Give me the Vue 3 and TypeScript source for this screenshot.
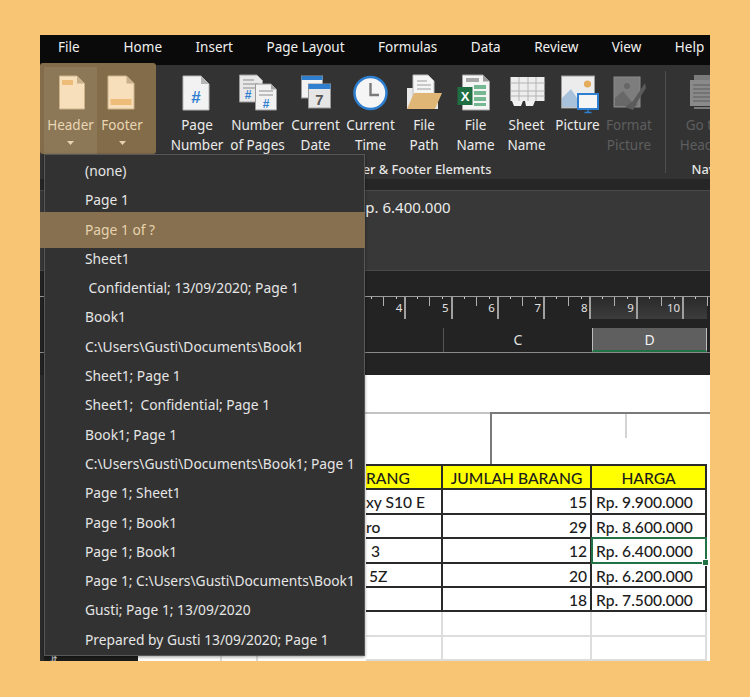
<script setup lang="ts">
// Excel "Header" dropdown over the Header & Footer Tools ribbon
interface RibbonButton {
  id: string
  lines: string[]
  width: number
  disabled?: boolean
}

const tabs = ['File', 'Home', 'Insert', 'Page Layout', 'Formulas', 'Data', 'Review', 'View', 'Help']

const hfButtons: RibbonButton[] = [
  { id: 'header', lines: ['Header'], width: 57 },
  { id: 'footer', lines: ['Footer'], width: 50 },
]

const elementButtons: RibbonButton[] = [
  { id: 'pagenum', lines: ['Page', 'Number'], width: 60 },
  { id: 'pages', lines: ['Number', 'of Pages'], width: 61 },
  { id: 'date', lines: ['Current', 'Date'], width: 55 },
  { id: 'time', lines: ['Current', 'Time'], width: 55 },
  { id: 'path', lines: ['File', 'Path'], width: 52 },
  { id: 'file', lines: ['File', 'Name'], width: 51 },
  { id: 'sheet', lines: ['Sheet', 'Name'], width: 51 },
  { id: 'picture', lines: ['Picture'], width: 51 },
  { id: 'format', lines: ['Format', 'Picture'], width: 52, disabled: true },
]

const menuItems = [
  '(none)',
  'Page 1',
  'Page 1 of ?',
  'Sheet1',
  ' Confidential; 13/09/2020; Page 1',
  'Book1',
  'C:\\Users\\Gusti\\Documents\\Book1',
  'Sheet1; Page 1',
  'Sheet1;  Confidential; Page 1',
  'Book1; Page 1',
  'C:\\Users\\Gusti\\Documents\\Book1; Page 1',
  'Page 1; Sheet1',
  'Page 1; Book1',
  'Page 1; Book1',
  'Page 1; C:\\Users\\Gusti\\Documents\\Book1',
  'Gusti; Page 1; 13/09/2020',
  'Prepared by Gusti 13/09/2020; Page 1',
]
const activeItem = 2

const rulerMarks = [4, 5, 6, 7, 8, 9, 10]

// The first column is mostly covered by the menu, pad is where its text shows
const rows = [
  { name: 'xy S10 E', pad: 0, qty: 15, price: 'Rp. 9.900.000' },
  { name: 'ro', pad: 0, qty: 29, price: 'Rp. 8.600.000' },
  { name: '3', pad: 5, qty: 12, price: 'Rp. 6.400.000', selected: true },
  { name: '5Z', pad: 3, qty: 20, price: 'Rp. 6.200.000' },
  { name: '', pad: 0, qty: 18, price: 'Rp. 7.500.000' },
]
</script>

<template>
  <div class="page">
    <div class="frame">
      <nav class="tabs">
        <span v-for="tab in tabs" :key="tab" class="tab">{{ tab }}</span>
      </nav>

      <section class="ribbon">
        <div class="hf-group">
          <div
            v-for="btn in hfButtons"
            :key="btn.id"
            :class="['rb-btn', 'hf-btn', btn.id]"
            :style="{ width: btn.width + 'px' }"
          >
            <svg class="rb-icon" width="44" height="40" viewBox="0 0 44 40">
              <path
                v-if="btn.id === 'header'"
                d="M10.5 2H28L35.5 9.500V35H10.500Z"
                fill="#f6dfba"
                stroke="#cdb48c"
              />
              <path v-if="btn.id === 'header'" d="M28 2V9.500H35.500Z" fill="#c9b08a" />
              <rect v-if="btn.id === 'header'" x="13" y="6" width="11" height="5" fill="#ecbc78" />
              <path
                v-if="btn.id === 'footer'"
                d="M8 2H26.500L34 9.500V35H8Z"
                fill="#f6dfba"
                stroke="#cdb48c"
              />
              <path v-if="btn.id === 'footer'" d="M26.500 2V9.500H34Z" fill="#c9b08a" />
              <rect v-if="btn.id === 'footer'" x="10.500" y="25" width="21" height="6" fill="#ecbc78" />
            </svg>
            <span class="rb-label">{{ btn.lines[0] }}</span>
            <svg class="caret" width="7" height="4" viewBox="0 0 7 4">
              <path d="M0 0H7L3.500 4Z" fill="#e6d3ae" />
            </svg>
          </div>
        </div>

        <div class="rb-group elements">
          <div class="rb-buttons">
            <div
              v-for="btn in elementButtons"
              :key="btn.id"
              :class="['rb-btn', { disabled: btn.disabled }]"
              :style="{ width: btn.width + 'px' }"
            >
              <svg class="rb-icon" width="44" height="40" viewBox="0 0 44 40">
                <template v-if="btn.id === 'pagenum'">
                  <path d="M8 2H26L34 10V36H8Z" fill="#f2f2f2" stroke="#b5b5b5" />
                  <path d="M26 2V10H34Z" fill="#b5b5b5" />
                  <text x="21" y="29" class="hash" font-size="17">#</text>
                </template>
                <template v-else-if="btn.id === 'pages'">
                  <path d="M3.500 1H21L26.500 6.500V28H3.500Z" fill="#e8e8e8" stroke="#9a9a9a" />
                  <path d="M7 6H18M7 10H22M7 14H22" stroke="#8c8c8c" />
                  <text x="12" y="25" class="hash" font-size="12">#</text>
                  <path d="M19.500 10H35L40.500 15.500V36H19.500Z" fill="#f2f2f2" stroke="#9a9a9a" />
                  <path d="M35 10V15.500H40.500Z" fill="#a8a8a8" />
                  <path d="M23 17H37M23 21H37" stroke="#8c8c8c" />
                  <text x="30" y="34" class="hash" font-size="12">#</text>
                </template>
                <template v-else-if="btn.id === 'date'">
                  <rect x="7.500" y="2" width="21" height="22" fill="#f2f2f2" stroke="#9a9a9a" />
                  <rect x="7.500" y="2" width="21" height="4" fill="#2f7fd1" />
                  <rect x="14.500" y="10" width="22" height="24" fill="#e6e6e6" stroke="#9a9a9a" />
                  <rect x="14.500" y="10" width="22" height="5" fill="#2f7fd1" />
                  <text x="25.500" y="31" class="date-num" font-size="15">7</text>
                </template>
                <template v-else-if="btn.id === 'time'">
                  <circle cx="21.500" cy="19" r="16" fill="#f5f5f5" stroke="#2f7fd1" stroke-width="2.500" />
                  <path d="M21.500 9V21H30" fill="none" stroke="#7a7a7a" stroke-width="2.400" />
                </template>
                <template v-else-if="btn.id === 'path'">
                  <path d="M5 35V14H11V22H36V35Z" fill="#e9e9e9" />
                  <path d="M11 1H26L32 7V26H11Z" fill="#f5f5f5" stroke="#bdbdbd" />
                  <path d="M15 7H25M15 11H29M15 15H29" stroke="#9c9c9c" />
                  <path d="M5 35L12 19H40L33 35Z" fill="#e0b676" />
                </template>
                <template v-else-if="btn.id === 'file'">
                  <path d="M8.500 1H29L35.500 7.500V36H8.500Z" fill="#f5f5f5" stroke="#a0a0a0" />
                  <path d="M29 1V7.500H35.500Z" fill="#9a9a9a" />
                  <path d="M12 4H25V8H12Z" fill="#a8a8a8" />
                  <path d="M20 11H32V15H20ZM20 17H32V21H20ZM20 23H32V27H20ZM20 29H32V32H20Z" fill="#75b892" />
                  <rect x="3.500" y="13" width="15" height="18" fill="#1f6f43" />
                  <text x="11" y="27" class="xl" font-size="13">X</text>
                </template>
                <template v-else-if="btn.id === 'sheet'">
                  <rect x="5.500" y="3" width="34" height="24" fill="#ededed" />
                  <path d="M5.500 9H39.500M5.500 17H39.500M5.500 22H39.500M14 3V27M23 3V27M31 3V27" stroke="#b4b4b4" />
                  <path d="M7 27H18L16 32H9ZM20 27H30L28 32H21Z" fill="#f2f2f2" />
                </template>
                <template v-else-if="btn.id === 'picture'">
                  <rect x="5.500" y="2" width="33" height="32" fill="#ececec" stroke="#9c9c9c" />
                  <circle cx="31.500" cy="10" r="3.600" fill="#e3ad5c" />
                  <path d="M6 33V24L15 15L27 33Z" fill="#a9c2dc" />
                  <rect x="22" y="20" width="20" height="15" fill="#f5f5f5" stroke="#2f7fd1" stroke-width="2" />
                  <path d="M32 35V38M28.500 38.500H35.500" stroke="#2f7fd1" stroke-width="1.400" />
                </template>
                <template v-else-if="btn.id === 'format'">
                  <rect x="7" y="3" width="26" height="30" fill="#7d7d7d" stroke="#8c8c8c" />
                  <circle cx="20" cy="12" r="3" fill="#676767" />
                  <path d="M8 32V24L16 17L28 32Z" fill="#686868" />
                  <path d="M38 9L26 27L29 30L39 14Z" fill="#5b5b5b" />
                  <path d="M26 27L18 33L26 36L30 30Z" fill="#5b5b5b" />
                </template>
              </svg>
              <span v-for="line in btn.lines" :key="line" class="rb-label">{{ line }}</span>
            </div>
          </div>
          <div class="group-name">Header &amp; Footer Elements</div>
        </div>

        <div class="rb-divider"></div>

        <div class="rb-group nav-group">
          <div class="rb-buttons">
            <div class="rb-btn disabled nav-btn">
              <svg class="rb-icon" width="44" height="40" viewBox="0 0 44 40">
                <rect x="13" y="1" width="18" height="6" fill="#7b7b7b" />
                <rect x="9" y="6" width="26" height="26" fill="#8a8a8a" />
                <path d="M12 11H32M12 15H32M12 19H32M12 23H32M12 27H32" stroke="#5c5c5c" />
                <rect x="13" y="33" width="22" height="2" fill="#7b7b7b" />
              </svg>
              <span class="rb-label">Go to</span>
              <span class="rb-label">Header</span>
            </div>
          </div>
          <div class="group-name">Navigation</div>
        </div>
      </section>

      <div class="strip"></div>

      <div class="formula">Rp. 6.400.000</div>

      <div class="dark-band"></div>

      <div class="ruler">
        <div v-for="n in rulerMarks" :key="n" :class="['mark', { on: n > 8 }]">
          <span class="mark-num">{{ n }}</span>
        </div>
        <div class="mark on tail"></div>
      </div>

      <div class="col-heads">
        <div class="col-b"></div>
        <div class="col-c">C</div>
        <div class="col-d">D</div>
      </div>

      <div class="dark-band small"></div>

      <div class="sheet">
        <div class="sheet-top">
          <div class="blank-left"></div>
          <div class="blank-box"><i></i></div>
        </div>

        <div class="grid">
          <div class="cell head cell-b">RANG</div>
          <div class="cell head center">JUMLAH BARANG</div>
          <div class="cell head center">HARGA</div>
          <template v-for="row in rows" :key="row.price">
            <div class="cell cell-b"><span :style="{ paddingLeft: row.pad + 'px' }">{{ row.name }}</span></div>
            <div class="cell right">{{ row.qty }}</div>
            <div :class="['cell', 'price', { selected: row.selected }]">{{ row.price }}</div>
          </template>
        </div>

        <div class="empty-row"></div>
        <div class="empty-row"></div>

        <div class="status-corner"><span class="corner-tab">⇵</span></div>
      </div>

      <ul class="menu">
        <li v-for="(item, i) in menuItems" :key="i" :class="['menu-item', { active: i === activeItem }]">
          <span>{{ item }}</span>
        </li>
      </ul>
    </div>
  </div>
</template>

<style>
html,
body {
  margin: 0;
  background: #f8c575;
}
</style>

<style scoped>
.page {
  width: 750px;
  height: 697px;
  padding: 35px 40px 36px;
  box-sizing: border-box;
  background: #f8c575;
  font-family: 'Noto Sans', 'Open Sans', sans-serif;
}

.frame {
  position: relative;
  display: flex;
  flex-direction: column;
  width: 670px;
  height: 626px;
  overflow: hidden;
  background: #232323;
}

.tabs {
  display: flex;
  flex: none;
  box-sizing: border-box;
  gap: 33.5px;
  height: 30px;
  padding: 0 0 6px 18px;
  align-items: center;
  background: #0a0a0a;
  color: #f0f0f0;
  font-size: 13.5px;
  white-space: nowrap;
}

.tab:nth-child(2) {
  margin-left: 10.5px;
}

.ribbon {
  display: flex;
  flex: none;
  height: 114px;
  background: #333333;
}

.hf-group {
  display: flex;
  flex: none;
  width: 116px;
  height: 91px;
  margin-top: -2px;
  border-radius: 3px;
  background: #826c4a;
}

.rb-btn {
  display: flex;
  flex: none;
  flex-direction: column;
  align-items: center;
  padding-top: 9px;
  color: #ececec;
  font-size: 13.5px;
  line-height: 19.5px;
  white-space: nowrap;
}

.rb-btn.disabled {
  color: #5e5e5e;
}

.hf-btn {
  padding-top: 11px;
  color: #e9d6b2;
}

.hf-btn.header {
  background: #8c7757;
  margin: 4px 0 0 4px;
  width: 53px !important;
  padding-top: 7px;
}

.rb-icon {
  display: block;
  flex: none;
  margin-bottom: 2px;
}

.caret {
  display: block;
  margin-top: 5px;
}

.rb-group {
  display: flex;
  flex: none;
  flex-direction: column;
}

.rb-buttons {
  display: flex;
  height: 96px;
}

.elements {
  margin-left: 11px;
}

.group-name {
  color: #e6e6e6;
  font-size: 12.8px;
  font-weight: 500;
  line-height: 17px;
  text-align: center;
  white-space: nowrap;
}

.rb-divider {
  flex: none;
  width: 1px;
  height: 102px;
  margin: 6px 0 0 10px;
  background: #4f4f4f;
}

.nav-group {
  width: 104px;
  margin-left: 7px;
}

.nav-btn {
  width: 60px;
}

.hash {
  fill: #2f7fd1;
  font-family: 'Liberation Sans', sans-serif;
  font-weight: 700;
  text-anchor: middle;
}

.date-num {
  fill: #555555;
  font-family: 'Liberation Sans', sans-serif;
  font-weight: 700;
  text-anchor: middle;
}

.xl {
  fill: #ffffff;
  font-family: 'Liberation Sans', sans-serif;
  font-weight: 700;
  text-anchor: middle;
}

.strip {
  flex: none;
  height: 11px;
  background: #262626;
}

.formula {
  flex: none;
  box-sizing: border-box;
  height: 81px;
  padding: 6px 0 0 316px;
  border-top: 1px solid #4a4a4a;
  border-bottom: 1px solid #4a4a4a;
  background: #383838;
  color: #ececec;
  font-size: 15px;
  line-height: 20px;
}

.dark-band {
  flex: none;
  height: 25px;
  background: #232323;
}

.dark-band.small {
  height: 23px;
  border-top: 1px solid #8a8a8a;
  box-sizing: border-box;
}

.ruler {
  display: flex;
  flex: none;
  box-sizing: border-box;
  height: 32px;
  padding-left: 320px;
  border-top: 1px solid #9a9a9a;
  background: #232323;
}

.mark {
  position: relative;
  flex: none;
  box-sizing: border-box;
  width: 46.3px;
  height: 22px;
  border-right: 2px solid #a0a0a0;
  color: #e0e0e0;
  font-size: 11.5px;
  text-align: right;
}

.mark::before {
  content: '';
  position: absolute;
  top: 0;
  left: 23px;
  width: 1px;
  height: 9px;
  background: #b0b0b0;
}

.mark::after {
  content: '';
  position: absolute;
  top: 0;
  left: 11px;
  width: 24px;
  height: 2px;
  border-right: 1px solid #c8c8c8;
  border-left: 1px solid #c8c8c8;
}

.mark.on {
  background: linear-gradient(#2a2a2a, #3c3c3c);
}

.mark.tail {
  width: 23px;
  border-right: 0;
}

.mark-num {
  padding-right: 2px;
  line-height: 22px;
}

.col-heads {
  display: flex;
  flex: none;
  height: 24px;
  padding-left: 403px;
  color: #e0e0e0;
  font-size: 14px;
  line-height: 24px;
  text-align: center;
}

.col-b {
  width: 0;
  border-right: 1px solid #555555;
}

.col-c {
  width: 148px;
}

.col-d {
  box-sizing: border-box;
  width: 115px;
  border-right: 1px solid #bdbdbd;
  border-bottom: 2px solid #217346;
  border-left: 1px solid #bdbdbd;
  background: #5f5f5f;
  color: #f2f2f2;
}

.sheet {
  position: relative;
  flex: 1;
  min-height: 0;
  overflow: hidden;
  border-left: 4px solid #2b2b2b;
  background:
    linear-gradient(#dddddd, #dddddd) 176px 0 / 2px 100% no-repeat,
    linear-gradient(#dddddd, #dddddd) 212px 0 / 2px 100% no-repeat,
    #ffffff;
}

.sheet-top {
  display: flex;
  box-sizing: border-box;
  height: 89px;
  padding: 37px 0 0 321px;
}

.blank-left {
  width: 125px;
  border-top: 2px solid #c4c4c4;
}

.blank-box {
  position: relative;
  flex: 1;
  border-top: 2px solid #7a7a7a;
  border-left: 2px solid #7a7a7a;
}

.blank-box i {
  display: block;
  width: 2px;
  height: 24px;
  margin-left: 133px;
  background: #d4d4d4;
}

.grid {
  display: grid;
  grid-template-columns: 77px 149px 115px;
  grid-auto-rows: 24.4px;
  width: 341px;
  margin-left: 322px;
  border-top: 2px solid #2a2a2a;
  box-sizing: content-box;
  color: #1c1c1c;
  font-family: Lato, 'Liberation Sans', sans-serif;
  font-size: 15.6px;
  font-weight: 500;
  line-height: 24px;
}

.cell {
  position: relative;
  box-sizing: border-box;
  padding: 0 3px;
  border-right: 2px solid #2a2a2a;
  border-bottom: 2px solid #2a2a2a;
  white-space: nowrap;
}

.cell-b {
  padding: 0;
}

.head {
  background: #ffff00;
}

.center {
  text-align: center;
}

.right {
  text-align: right;
}

.price {
  padding-left: 4px;
}

.selected::after {
  content: '';
  position: absolute;
  inset: -2px -2px -2px -1px;
  border: 2px solid #217346;
}

.selected::before {
  content: '';
  position: absolute;
  z-index: 1;
  right: -4px;
  bottom: -4px;
  width: 5px;
  height: 5px;
  border: 1px solid #ffffff;
  background: #217346;
}

.empty-row {
  box-sizing: border-box;
  width: 341px;
  height: 24.4px;
  margin-left: 322px;
  border-right: 2px solid #dddddd;
  border-bottom: 2px solid #dddddd;
  background:
    linear-gradient(#dddddd, #dddddd) 75px 0 / 2px 100% no-repeat,
    linear-gradient(#dddddd, #dddddd) 224px 0 / 2px 100% no-repeat;
}

.status-corner {
  position: absolute;
  bottom: 0;
  left: 0;
  display: flex;
  width: 94px;
  height: 6px;
  background: #1c1c1c;
  overflow: hidden;
}

.corner-tab {
  padding-left: 6px;
  color: #e8e8e8;
  font-size: 9px;
  line-height: 9px;
}

.menu {
  position: absolute;
  top: 119px;
  left: 4px;
  box-sizing: border-box;
  width: 321px;
  height: 502px;
  margin: 0;
  padding: 1px 0 0;
  border: 1px solid #575757;
  background: #323232;
  box-shadow: 0 1px 3px rgba(0, 0, 0, 0.4);
  list-style: none;
  color: #e6e6e6;
  font-size: 13.8px;
}

.menu-item {
  position: relative;
  height: 29.3px;
  padding-left: 40px;
  line-height: 29.3px;
  white-space: pre;
}

.menu-item span {
  position: relative;
}

.menu-item.active::before {
  content: '';
  position: absolute;
  inset: -3px -1px -4px -5px;
  background: #86704f;
}

.menu-item.active {
  color: #e6d3ae;
}
</style>
